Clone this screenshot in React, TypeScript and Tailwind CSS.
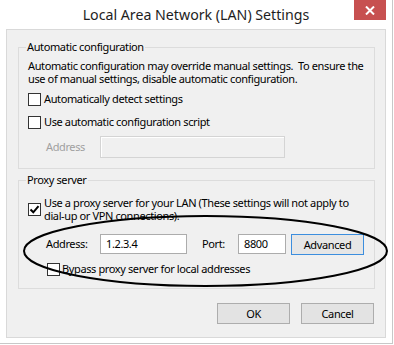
import React from "react";

function Check({ checked = false }: { checked?: boolean }) {
  return (
    <span className="w-[13px] h-[13px] border border-[#333333] bg-white shrink-0 flex items-center justify-center">
      {checked && (
        <svg width="11" height="11" viewBox="0 0 11 11">
          <path d="M1.5 5.5 L4.3 8.3 L9.5 2.2" stroke="#000" strokeWidth="2" fill="none" />
        </svg>
      )}
    </span>
  );
}

function Btn({ label, def = false }: { label: string; def?: boolean }) {
  return (
    <div
      className={`w-[73px] h-[21px] flex items-center justify-center border ${
        def ? "border-[#3c8ede] bg-[#e6e6e6]" : "border-[#adadad] bg-[#e3e3e3]"
      }`}
    >
      {label}
    </div>
  );
}

export default function App() {
  return (
    <div className="relative w-[393px] h-[344px] bg-white border-r border-b border-[#c8c8c8] text-[11px] tracking-[-0.38px] text-black font-['Noto_Sans',sans-serif] leading-[14px]">
      {/* Title bar */}
      <div className="h-[29px] flex items-center justify-center">
        <span className="text-[14.2px] tracking-normal text-[#1e1e1e] mt-[1px]">Local Area Network (LAN) Settings</span>
      </div>
      <div className="absolute top-0 right-[6px] w-[32px] h-[20px] bg-[#c75050] flex items-center justify-center">
        <svg width="10" height="9" viewBox="0 0 10 9">
          <path d="M1 0.5 L9 8.5 M9 0.5 L1 8.5" stroke="#fff" strokeWidth="2" />
        </svg>
      </div>

      {/* Body */}
      <div className="ml-[6px] w-[380px] h-[309px] border border-[#d9d9d9] bg-[#f0f0f0] pl-[11px] flex flex-col">
        <fieldset className="mt-[9px] w-[357px] h-[130px] border border-[#dcdcdc] pl-[9px] pr-0 m-0">
          <legend className="px-[1px] -ml-[2px] leading-[16px]">Automatic configuration</legend>
          <p className="mt-[4px] whitespace-nowrap leading-[13px]">
            Automatic configuration may override manual settings.&nbsp; To ensure the
            <br />
            use of manual settings, disable automatic configuration.
          </p>
          <div className="mt-[7px] flex items-center gap-[3px]">
            <Check />
            <span>Automatically detect settings</span>
          </div>
          <div className="mt-[9px] flex items-center gap-[3px]">
            <Check />
            <span>Use automatic configuration script</span>
          </div>
          <div className="mt-[7px] flex items-center">
            <span className="ml-[18px] w-[54px] text-[#a0a0a0]">Address</span>
            <div className="w-[185px] h-[22px] border border-[#d4d4d4] bg-[#f0f0f0] shadow-[inset_1px_1px_0_#fff]" />
          </div>
        </fieldset>

        <fieldset className="mt-[3px] w-[357px] h-[117px] border border-[#dcdcdc] pl-[9px] pr-0 m-0">
          <legend className="px-[1px] -ml-[2px] leading-[16px]">Proxy server</legend>
          <div className="mt-[8px] flex items-center gap-[3px]">
            <Check checked />
            <span className="whitespace-nowrap leading-[13px]">
              Use a proxy server for your LAN (These settings will not apply to
              <br />
              dial-up or VPN connections).
            </span>
          </div>
          <div className="mt-[10px] flex items-center">
            <span className="ml-[18px] w-[54px]">Address:</span>
            <div className="w-[87px] h-[20px] border border-[#acacac] bg-white flex items-center pl-[5px]">1.2.3.4</div>
            <span className="ml-[15px] w-[36px]">Port:</span>
            <div className="w-[48px] h-[20px] border border-[#acacac] bg-white flex items-center pl-[5px]">8800</div>
            <div className="ml-[5px] mt-[2px]">
              <Btn label="Advanced" def />
            </div>
          </div>
          <div className="mt-[7px] ml-[19px] flex items-center gap-[2px]">
            <Check />
            <span>Bypass proxy server for local addresses</span>
          </div>
        </fieldset>

        <div className="mt-[14px] flex gap-[11px] pl-[199px]">
          <Btn label="OK" />
          <Btn label="Cancel" />
        </div>
      </div>

      {/* Annotation ellipse */}
      <svg className="absolute left-0 top-0 pointer-events-none" width="393" height="344" viewBox="0 0 393 344">
        <ellipse cx="205.5" cy="251" rx="181.5" ry="35" fill="none" stroke="#000" strokeWidth="2" />
      </svg>
    </div>
  );
}
